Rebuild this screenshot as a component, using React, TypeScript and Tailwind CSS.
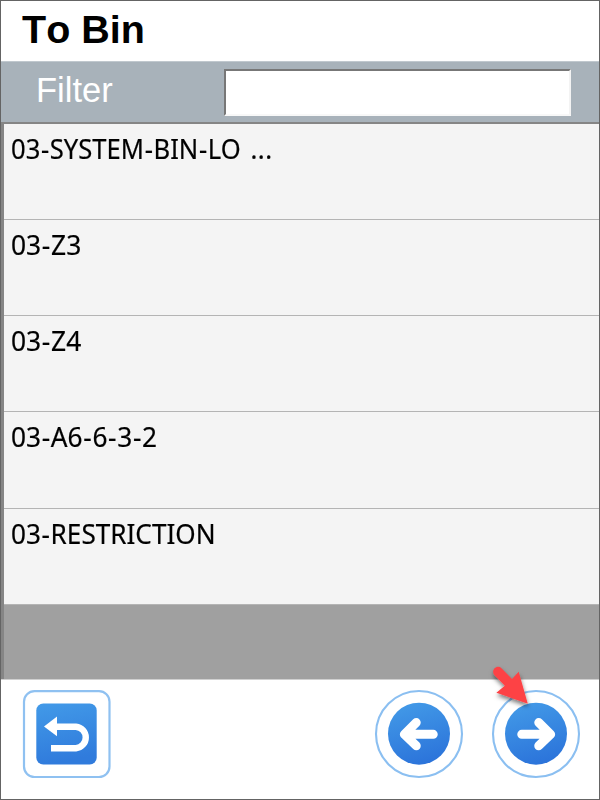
import React from "react";

const bins = [
  { label: "03-SYSTEM-BIN-LO", more: true, fit: "scale-x-[0.93]" },
  { label: "03-Z3", more: false, fit: "scale-x-[0.96]" },
  { label: "03-Z4", more: false, fit: "scale-x-[0.96]" },
  { label: "03-A6-6-3-2", more: false, fit: "scale-x-[0.955]" },
  { label: "03-RESTRICTION", more: false, fit: "scale-x-[0.95]" },
];

function BinLabel({ label, more }: { label: string; more: boolean }) {
  return (
    <>
      {label.split("-").map((part, i) => (
        <React.Fragment key={i}>
          {i > 0 && <span className="px-[0.7px]">-</span>}
          {part}
        </React.Fragment>
      ))}
      {more && <span className="pl-[3px] tracking-[0.5px]"> ...</span>}
    </>
  );
}

function BackButton() {
  return (
    <button aria-label="Back" className="h-[90px] w-[90px]">
      <svg viewBox="0 0 90 90" className="block h-full w-full">
        <defs>
          <linearGradient id="back" x1="0" y1="0" x2="0.2" y2="1">
            <stop stopColor="#429ae8" />
            <stop offset="1" stopColor="#307bdc" />
          </linearGradient>
        </defs>
        <rect x="2" y="2.2" width="85.5" height="85.8" rx="10.5" fill="white" stroke="#8fc1f1" strokeWidth="2.2" />
        <rect x="14.3" y="14.5" width="60.4" height="61" rx="7" fill="url(#back)" />
        <path d="M34 37.7H54A10.8 10.8 0 0 1 54 59.2H29" fill="none" stroke="white" strokeWidth="6.4" />
        <path d="M22 37.6L35 27.5V47.3Z" fill="white" />
      </svg>
    </button>
  );
}

function ArrowButton({ direction }: { direction: "left" | "right" }) {
  const id = "disc-" + direction;
  return (
    <button aria-label={direction === "left" ? "Previous" : "Next"} className="h-[90px] w-[90px]">
      <svg viewBox="0 0 90 90" className="block h-full w-full">
        <defs>
          <linearGradient id={id} x1="0.3" y1="0" x2="0.6" y2="1">
            <stop stopColor="#4299e7" />
            <stop offset="1" stopColor="#2b73da" />
          </linearGradient>
        </defs>
        <circle cx="45" cy="45" r="43" fill="white" stroke="#8bbff1" strokeWidth="2.1" />
        <circle cx="45" cy="44.7" r="31" fill={`url(#${id})`} />
        <g transform={direction === "right" ? "translate(90 0) scale(-1 1)" : undefined}>
          <path d="M42.3 33.5L30.3 45.3L42.3 56.8M32 45.3H59.3" fill="none" stroke="white" strokeWidth="8.9" strokeLinecap="round" strokeLinejoin="round" />
          <path d="M31 45.3L41 35.5V55Z" fill="white" />
        </g>
      </svg>
    </button>
  );
}

export default function App() {
  return (
    <main className="relative flex h-[800px] w-[600px] flex-col overflow-hidden border border-[#646464] bg-white">
      <header className="h-[60px] shrink-0 pl-[21px] pt-[5px] font-['Liberation_Sans',Arial,sans-serif] text-[39.5px] font-bold leading-[46px] text-black [font-kerning:none]">
        To Bin
      </header>
      <section className="flex h-[61px] shrink-0 border-t border-[#c0c8ce] bg-[#a8b2ba]">
        <label htmlFor="filter" className="w-[223px] pl-[35px] pt-[7px] font-['Liberation_Sans',Arial,sans-serif] text-[34.5px] leading-[42px] text-white">
          Filter
        </label>
        <input
          id="filter"
          className="mt-[7px] h-[47px] w-[347px] border-2 border-b-[#f8f8f8] border-l-[#777777] border-r-[#f3f3f3] border-t-[#777777] bg-white px-2 text-2xl outline-none"
        />
      </section>
      <section className="h-[557px] shrink-0 border-l-[3px] border-t-2 border-[#858585] bg-[#a0a0a0]">
        {bins.map((bin) => (
          <div key={bin.label} className="h-[96.15px] border-b border-[#b4b4b4] bg-[#f4f4f4] pl-[7px] pt-[6px]">
            <span className={`inline-block origin-left whitespace-pre font-['Noto_Sans',sans-serif] text-[27.5px] leading-[38px] text-black [-webkit-text-stroke:0.2px_black] ${bin.fit}`}>
              <BinLabel label={bin.label} more={bin.more} />
            </span>
          </div>
        ))}
      </section>
      <footer className="flex grow items-start border-t border-[#d0d0d0] pl-[21px] pt-[9px]">
        <BackButton />
        <div className="ml-[262px] flex gap-[27px]">
          <ArrowButton direction="left" />
          <ArrowButton direction="right" />
        </div>
      </footer>
      <svg className="pointer-events-none absolute left-[479px] top-[654px] h-[66px] w-[66px]" viewBox="480 655 66 66">
        <defs>
          <filter id="shadow" x="-30%" y="-30%" width="170%" height="170%">
            <feDropShadow dx="0.5" dy="3" stdDeviation="2.2" floodColor="#000" floodOpacity="0.5" />
          </filter>
        </defs>
        <path d="M501.5 668.2L512 679L518.7 671.8L527.8 703.8L496.4 692.8L504.8 685.7L494.5 675.3C490.3 670.4 496.7 663.7 501.5 668.2Z" fill="#fd4345" filter="url(#shadow)" />
      </svg>
    </main>
  );
}
